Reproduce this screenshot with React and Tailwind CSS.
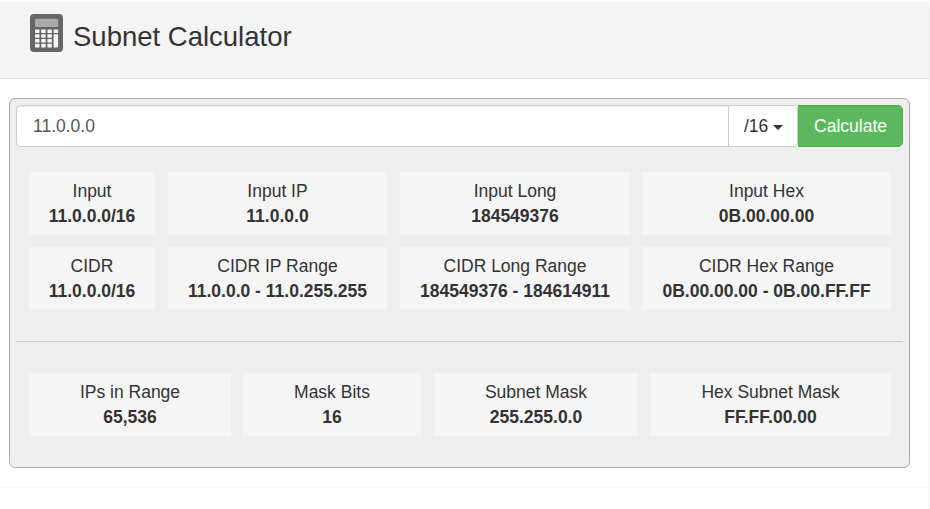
function CalculatorIcon() {
  const keys = [];
  for (let row = 0; row < 4; row++) {
    for (let col = 0; col < 4; col++) {
      if (col === 3 && row > 0) continue;
      keys.push(
        <rect key={`${row}-${col}`} x={5 + col * 6.2} y={15.4 + row * 4.8} width="4.5" height="3.6" rx="0.4" />
      );
    }
  }
  return (
    <svg className="mt-3 h-[38px] w-[33px] shrink-0" viewBox="0 0 33 38" aria-hidden="true">
      <rect width="33" height="38" rx="4" fill="#666" />
      <rect x="5" y="4.7" width="23.2" height="8.3" rx="1.5" fill="#aaa" />
      <g fill="#f5f5f5">
        {keys}
        <rect x="23.6" y="20.2" width="4.5" height="13.2" rx="0.4" />
      </g>
    </svg>
  );
}

function Cell({ label, value, width }) {
  return (
    <div className={`${width} h-[63px] shrink-0 bg-[#f5f5f5] pt-[7px] text-center leading-[25px] whitespace-nowrap`}>
      <div>{label}</div>
      <div className="font-bold">{value}</div>
    </div>
  );
}

export default function App() {
  return (
    <div className="h-[509px] w-[930px] overflow-hidden border-r border-[#eee] bg-white pt-0.5 font-['Liberation_Sans',Arial,sans-serif] text-[17.5px] text-[#333]">
      <main className="h-[486px] rounded-r-md border-b border-[#f2f2f2]">
        <header className="flex h-[77px] rounded-tr-[4px] border-b border-[#ddd] bg-[#f4f4f4] pl-[30px]">
          <CalculatorIcon />
          <h1 className="ml-[10px] pt-[19px] text-[27.5px] leading-8">Subnet Calculator</h1>
        </header>
        <section className="mt-[19px] ml-[9px] h-[370px] w-[901px] rounded-[6px] border border-[#aaa] bg-[#eee] p-1.5">
          <form className="flex h-[42px]" onSubmit={(e) => e.preventDefault()}>
            <input
              aria-label="IP address"
              defaultValue="11.0.0.0"
              className="w-[712px] rounded-l-[5px] border border-r-0 border-[#ccc] bg-white px-4 text-[#555] shadow-[inset_0_1px_1px_rgba(0,0,0,0.075)] outline-none"
            />
            <button type="button" className="flex w-[70px] items-center rounded-r-[4px] border border-[#ccc] bg-white pl-[15px]">
              /16
              <span className="mt-0.5 ml-[5px] border-x-[5px] border-t-[5px] border-x-transparent border-t-[#333]" />
            </button>
            <button type="submit" className="w-[105px] rounded-r-[5px] border border-[#4cae4c] bg-[#5cb85c] text-white">
              Calculate
            </button>
          </form>
          <div className="mt-[25px] ml-[13px] flex flex-col gap-3">
            <div className="flex">
              <Cell width="w-[126px]" label="Input" value="11.0.0.0/16" />
              <Cell width="ml-[13px] w-[219px]" label="Input IP" value="11.0.0.0" />
              <Cell width="ml-[13px] w-[230px]" label="Input Long" value="184549376" />
              <Cell width="ml-3 w-[249px]" label="Input Hex" value="0B.00.00.00" />
            </div>
            <div className="flex">
              <Cell width="w-[126px]" label="CIDR" value="11.0.0.0/16" />
              <Cell width="ml-[13px] w-[219px]" label="CIDR IP Range" value="11.0.0.0 - 11.0.255.255" />
              <Cell width="ml-[13px] w-[230px]" label="CIDR Long Range" value="184549376 - 184614911" />
              <Cell width="ml-3 w-[249px]" label="CIDR Hex Range" value="0B.00.00.00 - 0B.00.FF.FF" />
            </div>
          </div>
          <hr className="mt-[31px] border-t border-[#ccc]" />
          <div className="mt-[31px] ml-[13px] flex">
            <Cell width="w-[202px]" label="IPs in Range" value="65,536" />
            <Cell width="ml-3 w-[178px]" label="Mask Bits" value="16" />
            <Cell width="ml-[13px] w-[204px]" label="Subnet Mask" value="255.255.0.0" />
            <Cell width="ml-3 w-[241px]" label="Hex Subnet Mask" value="FF.FF.00.00" />
          </div>
        </section>
      </main>
    </div>
  );
}
